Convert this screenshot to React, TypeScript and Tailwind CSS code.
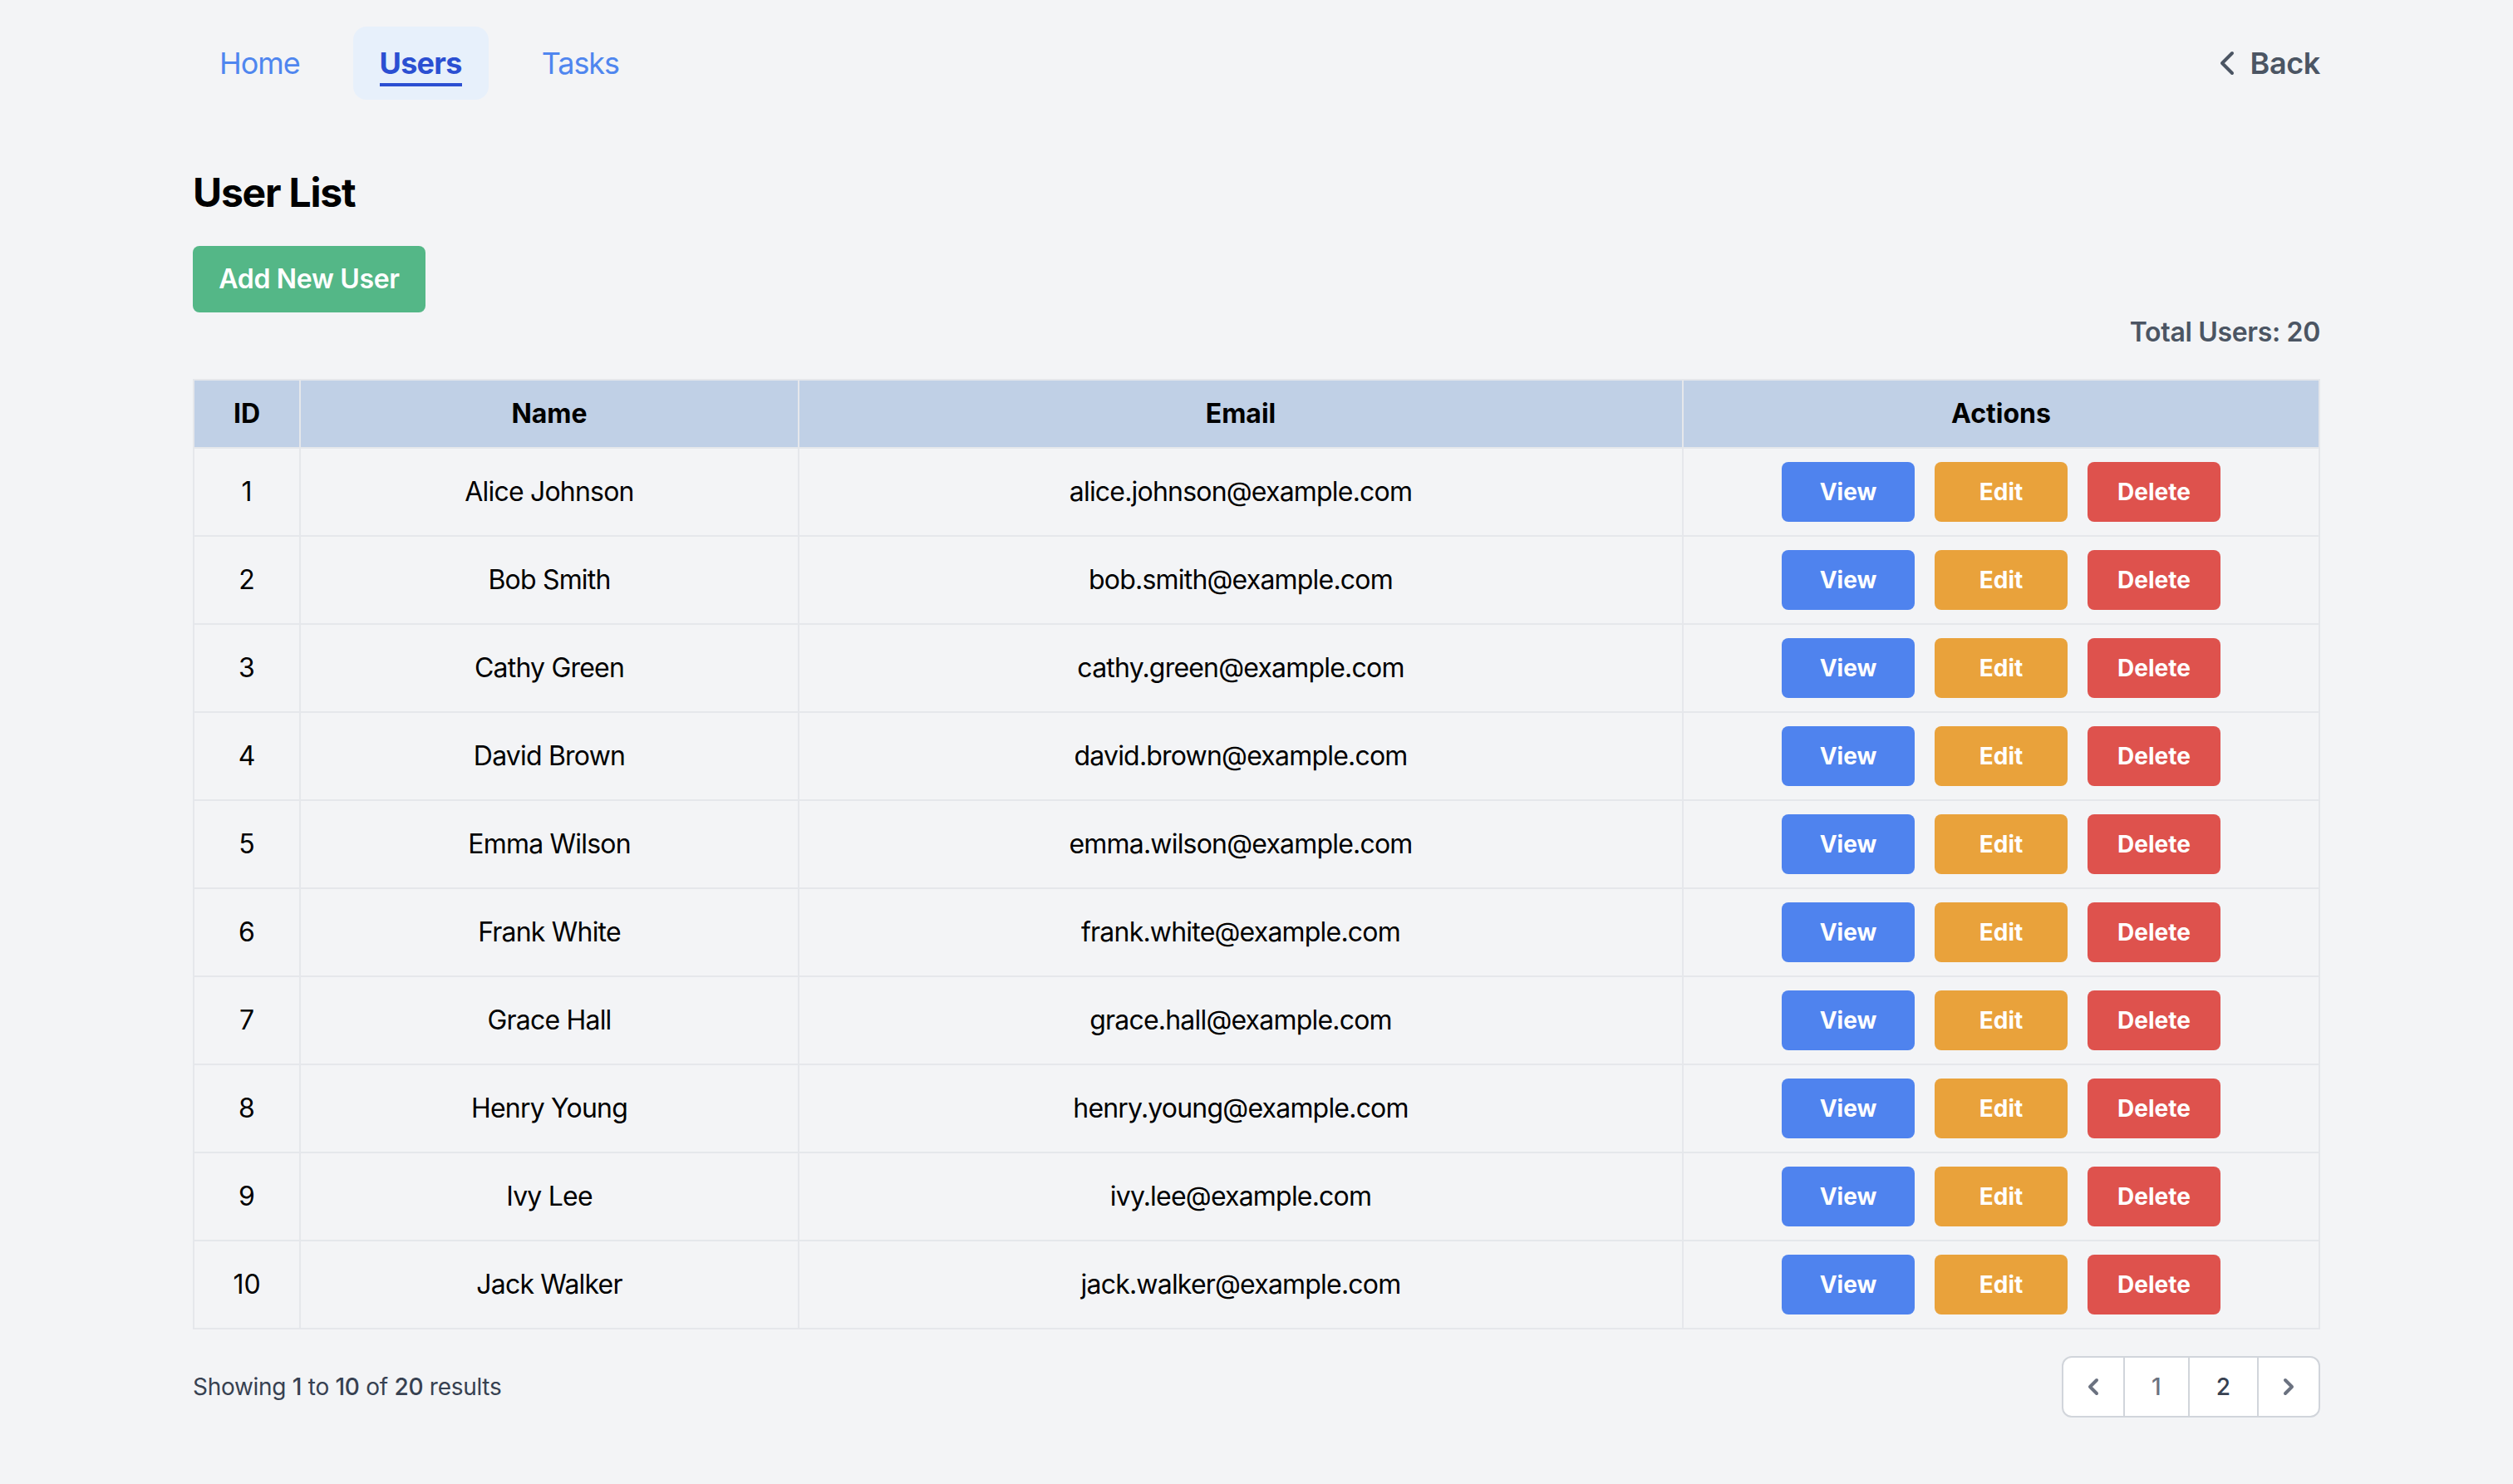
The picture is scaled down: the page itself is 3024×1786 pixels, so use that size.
import React from "react";
import { ChevronLeft, ChevronRight } from "lucide-react";

const users = [
  { id: 1, name: "Alice Johnson", email: "alice.johnson@example.com" },
  { id: 2, name: "Bob Smith", email: "bob.smith@example.com" },
  { id: 3, name: "Cathy Green", email: "cathy.green@example.com" },
  { id: 4, name: "David Brown", email: "david.brown@example.com" },
  { id: 5, name: "Emma Wilson", email: "emma.wilson@example.com" },
  { id: 6, name: "Frank White", email: "frank.white@example.com" },
  { id: 7, name: "Grace Hall", email: "grace.hall@example.com" },
  { id: 8, name: "Henry Young", email: "henry.young@example.com" },
  { id: 9, name: "Ivy Lee", email: "ivy.lee@example.com" },
  { id: 10, name: "Jack Walker", email: "jack.walker@example.com" },
];

export default function App() {
  return (
    <div className="[zoom:2] min-h-[893px] bg-[#f3f4f6] font-['Inter','Noto_Sans',sans-serif] text-black">
      <div className="max-w-[1280px] mx-auto">
        <nav className="flex items-center justify-between py-4">
          <div className="flex items-center gap-4">
            <a className="px-4 py-2 rounded-lg text-lg tracking-[-0.03em] text-[#4f86ef]">Home</a>
            <a className="px-4 py-2 rounded-lg text-lg tracking-[-0.02em] bg-[#e7f0fb] text-[#2b4fd2] font-bold">
              <span className="border-b-2 border-[#2b4fd2] pb-px">Users</span>
            </a>
            <a className="px-4 py-2 rounded-lg text-lg tracking-[-0.03em] text-[#4f86ef]">Tasks</a>
          </div>
          <button className="flex items-center gap-0.5 text-lg font-semibold tracking-[-0.01em] text-[#4b5563]">
            <ChevronLeft size={24} strokeWidth={2} />
            <span>Back</span>
          </button>
        </nav>

        <main className="pt-6">
          <h2 className="text-2xl font-bold tracking-[-0.025em] mb-4">User List</h2>
          <button className="w-[140px] py-2 rounded bg-[#54b787] text-white font-semibold text-base tracking-[-0.01em] whitespace-nowrap text-center">
            Add New User
          </button>
          <div className="text-right text-base font-semibold tracking-[-0.01em] text-[#4b5563] mb-4">
            Total Users: 20
          </div>

          <table className="w-full table-fixed border-collapse border border-[#e5e7eb]">
            <colgroup>
              <col className="w-[64px]" />
              <col className="w-[300px]" />
              <col className="w-[532px]" />
              <col />
            </colgroup>
            <thead>
              <tr className="bg-[#c0d0e6]">
                <th className="py-2 border border-[#e5e7eb] font-bold text-base">ID</th>
                <th className="py-2 border border-[#e5e7eb] font-bold text-base">Name</th>
                <th className="py-2 border border-[#e5e7eb] font-bold text-base">Email</th>
                <th className="py-2 border border-[#e5e7eb] font-bold text-base">Actions</th>
              </tr>
            </thead>
            <tbody>
              {users.map((u) => (
                <tr key={u.id}>
                  <td className="py-2 border border-[#e5e7eb] text-center text-base">{u.id}</td>
                  <td className="py-2 border border-[#e5e7eb] text-center text-base tracking-[-0.025em]">{u.name}</td>
                  <td className="py-2 border border-[#e5e7eb] text-center text-base tracking-[-0.025em]">{u.email}</td>
                  <td className="py-2 border border-[#e5e7eb]">
                    <div className="flex justify-center gap-3">
                      <button className="w-20 py-2 rounded bg-[#4f83ee] text-white font-bold text-sm">View</button>
                      <button className="w-20 py-2 rounded bg-[#e9a23b] text-white font-bold text-sm">Edit</button>
                      <button className="w-20 py-2 rounded bg-[#de524d] text-white font-bold text-sm">Delete</button>
                    </div>
                  </td>
                </tr>
              ))}
            </tbody>
          </table>

          <div className="flex items-center justify-between mt-4">
            <p className="text-sm tracking-[-0.01em] text-[#374151]">
              Showing <span className="font-medium">1</span> to <span className="font-medium">10</span> of{" "}
              <span className="font-medium">20</span> results
            </p>
            <div className="inline-flex border border-[#d1d5db] rounded-md bg-white overflow-hidden">
              <button className="h-[35px] px-2.5 flex items-center text-[#6b7280]">
                <ChevronLeft size={16} strokeWidth={3} />
              </button>
              <button className="h-[35px] px-4 flex items-center border-l border-[#d1d5db] text-sm font-medium text-[#6b7280]">
                1
              </button>
              <button className="h-[35px] px-4 flex items-center border-l border-[#d1d5db] text-sm font-medium text-[#374151]">
                2
              </button>
              <button className="h-[35px] px-2.5 flex items-center border-l border-[#d1d5db] text-[#6b7280]">
                <ChevronRight size={16} strokeWidth={3} />
              </button>
            </div>
          </div>
        </main>
      </div>
    </div>
  );
}
